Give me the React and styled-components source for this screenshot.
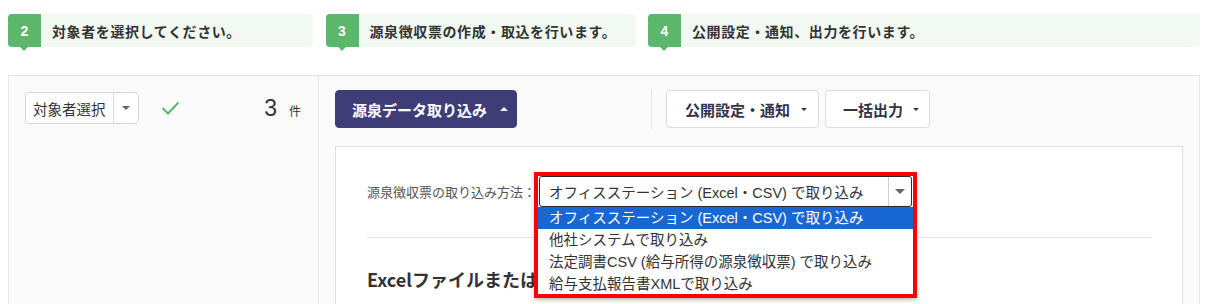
import React from "react";
import styled, { createGlobalStyle } from "styled-components";

const GlobalStyle = createGlobalStyle`
  body {
    margin: 0;
    background: #fff;
    font-family: "Liberation Sans", "Noto Sans CJK JP", sans-serif;
    color: #333;
  }
`;

const Page = styled.div`
  padding: 14px 9px 0 8px;
  height: 304px;
  box-sizing: border-box;
  overflow: hidden;
`;

const StepRow = styled.div`
  display: grid;
  grid-template-columns: 305px 310px 552px;
  justify-content: space-between;
`;

const Step = styled.div`
  display: flex;
  align-items: center;
  height: 33px;
  background: #f2f9f3;
  border-radius: 4px;
`;

const Badge = styled.div`
  position: relative;
  width: 33px;
  height: 33px;
  flex: none;
  display: flex;
  align-items: center;
  justify-content: center;
  background: #5cb66c;
  color: #fff;
  font-weight: bold;
  font-size: 14px;
  border-radius: 4px 0 0 4px;

  &::after {
    content: "";
    position: absolute;
    left: 12px;
    bottom: -4px;
    border-left: 4px solid transparent;
    border-right: 4px solid transparent;
    border-top: 4px solid #5cb66c;
  }
`;

const StepText = styled.span`
  padding-left: 11px;
  font-family: "Noto Sans CJK JP", sans-serif;
  font-weight: bold;
  font-size: 14px;
  letter-spacing: 0.6px;
  color: #333;
`;

const Panel = styled.div`
  margin-top: 28px;
  display: grid;
  grid-template-columns: 310px 1fr;
  min-height: 260px;
  background: #fafafa;
  border: 1px solid #e6e6e6;
`;

const LeftCol = styled.div`
  border-right: 1px solid #e6e6e6;
  padding: 16px 17px 0 16px;
`;

const TargetRow = styled.div`
  display: flex;
  align-items: center;
  height: 32px;
`;

const SmallSelect = styled.div`
  display: flex;
  height: 32px;
  box-sizing: border-box;
  background: #fff;
  border: 1px solid #d6d6d6;
  border-radius: 4px;
`;

const SmallSelectText = styled.span`
  display: flex;
  align-items: center;
  padding: 0 7px 0 7px;
  font-family: "Noto Sans CJK JP", sans-serif;
  font-size: 14.5px;
  color: #333;
`;

const ArrowCell = styled.span`
  display: flex;
  align-items: center;
  justify-content: center;
  width: ${(p) => p.w}px;
  border-left: 1px solid ${(p) => p.line};
`;

const Caret = styled.span`
  width: 0;
  height: 0;
  border-left: ${(p) => p.s}px solid transparent;
  border-right: ${(p) => p.s}px solid transparent;
  ${(p) => (p.up ? "border-bottom" : "border-top")}: ${(p) => p.s}px solid ${(p) => p.c};
`;

const Check = styled.svg`
  margin-left: 22px;
  width: 19px;
  height: 14px;
`;

const Count = styled.div`
  margin-left: auto;
  display: flex;
  align-items: baseline;
  gap: 12px;
  color: #333;
`;

const CountNum = styled.span`
  font-size: 23px;
`;

const CountUnit = styled.span`
  font-family: "Noto Sans CJK JP", sans-serif;
  font-size: 12px;
`;

const RightCol = styled.div`
  padding: 13px 16px 0 16px;
`;

const Toolbar = styled.div`
  display: flex;
  align-items: center;
`;

const ToolGroup = styled.div`
  display: flex;
  gap: 6px;
  width: ${(p) => (p.w ? `${p.w}px` : "auto")};
  margin-left: ${(p) => p.ml || 0}px;
`;

const Separator = styled.div`
  width: 1px;
  height: 40px;
  background: #e6e6e6;
`;

const Button = styled.button`
  display: flex;
  align-items: center;
  gap: ${(p) => p.gap}px;
  height: 38px;
  padding: 0 ${(p) => p.pr}px 0 ${(p) => p.pl}px;
  border-radius: 4px;
  border: 1px solid ${(p) => (p.primary ? "#3f3d78" : "#dcdcdc")};
  background: ${(p) => (p.primary ? "#3f3d78" : "#fff")};
  color: ${(p) => (p.primary ? "#fff" : "#33334a")};
  font-family: "Noto Sans CJK JP", sans-serif;
  font-weight: bold;
  font-size: 15px;
  cursor: pointer;
`;

const Inner = styled.div`
  margin-top: 17px;
  min-height: 200px;
  background: #fff;
  border: 1px solid #e0e0e0;
  padding: 29px 31px 0;
`;

const MethodRow = styled.div`
  display: flex;
  align-items: center;
  height: 31px;
`;

const MethodLabel = styled.span`
  font-family: "Noto Sans CJK JP", sans-serif;
  font-size: 13px;
  color: #555;
`;

const SelectWrap = styled.div`
  position: relative;
  margin-left: 3px;
  width: 373px;
`;

const SelectBox = styled.div`
  display: flex;
  height: 31px;
  box-sizing: border-box;
  border: 1px solid #2a2a2a;
  border-radius: 3px;
  background: #fff;
`;

const SelectValue = styled.span`
  flex: 1;
  display: flex;
  align-items: center;
  padding-left: 9px;
  font-size: 14.5px;
  color: #333;
`;

const OptionList = styled.ul`
  position: absolute;
  top: 100%;
  left: -1px;
  right: -1px;
  margin: 0;
  padding: 0;
  list-style: none;
  background: #fff;
  box-shadow: 0 2px 6px rgba(0, 0, 0, 0.25);
  z-index: 2;
`;

const Option = styled.li`
  height: 22px;
  line-height: 22px;
  padding-left: 11px;
  font-size: 14.5px;
  white-space: nowrap;
  background: ${(p) => (p.selected ? "#1967d2" : "#fff")};
  color: ${(p) => (p.selected ? "#fff" : "#333")};
`;

const Highlight = styled.div`
  position: absolute;
  left: -5px;
  top: -4px;
  width: 383px;
  height: 126px;
  box-sizing: border-box;
  border: 4px solid #ff0000;
  pointer-events: none;
  z-index: 3;
  box-shadow: 0 2px 4px rgba(0, 0, 0, 0.2);
`;

const Rule = styled.div`
  margin-top: 30px;
  border-top: 1px solid #e5e5e5;
`;

const Heading = styled.h2`
  margin: 28px 0 0;
  font-family: "Noto Sans CJK JP", sans-serif;
  font-size: 18px;
  font-weight: bold;
  color: #333;
`;

const steps = [
  { n: 2, text: "対象者を選択してください。" },
  { n: 3, text: "源泉徴収票の作成・取込を行います。" },
  { n: 4, text: "公開設定・通知、出力を行います。" },
];

const options = [
  "オフィスステーション (Excel・CSV) で取り込み",
  "他社システムで取り込み",
  "法定調書CSV (給与所得の源泉徴収票) で取り込み",
  "給与支払報告書XMLで取り込み",
];

export default function App() {
  return (
    <>
      <GlobalStyle />
      <Page>
        <StepRow>
          {steps.map((s) => (
            <Step key={s.n}>
              <Badge>{s.n}</Badge>
              <StepText>{s.text}</StepText>
            </Step>
          ))}
        </StepRow>

        <Panel>
          <LeftCol>
            <TargetRow>
              <SmallSelect>
                <SmallSelectText>対象者選択</SmallSelectText>
                <ArrowCell w={24} line="#d6d6d6">
                  <Caret s={4} c="#666" />
                </ArrowCell>
              </SmallSelect>
              <Check viewBox="0 0 19 14">
                <polyline
                  points="1.5,7 7,12.5 17.5,1.5"
                  fill="none"
                  stroke="#5cb66c"
                  strokeWidth="2"
                />
              </Check>
              <Count>
                <CountNum>3</CountNum>
                <CountUnit>件</CountUnit>
              </Count>
            </TargetRow>
          </LeftCol>

          <RightCol>
            <Toolbar>
              <ToolGroup w={316}>
                <Button primary pl={16} pr={8} gap={13}>
                  源泉データ取り込み
                  <Caret up s={4} c="#fff" />
                </Button>
              </ToolGroup>
              <Separator />
              <ToolGroup ml={14}>
                <Button pl={18} pr={11} gap={11}>
                  公開設定・通知
                  <Caret s={3.5} c="#33334a" />
                </Button>
                <Button pl={17} pr={10} gap={10}>
                  一括出力
                  <Caret s={3.5} c="#33334a" />
                </Button>
              </ToolGroup>
            </Toolbar>

            <Inner>
              <MethodRow>
                <MethodLabel>源泉徴収票の取り込み方法：</MethodLabel>
                <SelectWrap>
                  <SelectBox>
                    <SelectValue>{options[0]}</SelectValue>
                    <ArrowCell w={22} line="#cfcfcf">
                      <Caret s={5} c="#666" />
                    </ArrowCell>
                  </SelectBox>
                  <OptionList>
                    {options.map((o, i) => (
                      <Option key={o} selected={i === 0}>
                        {o}
                      </Option>
                    ))}
                  </OptionList>
                  <Highlight />
                </SelectWrap>
              </MethodRow>
              <Rule />
              <Heading>Excelファイルまたは</Heading>
            </Inner>
          </RightCol>
        </Panel>
      </Page>
    </>
  );
}
